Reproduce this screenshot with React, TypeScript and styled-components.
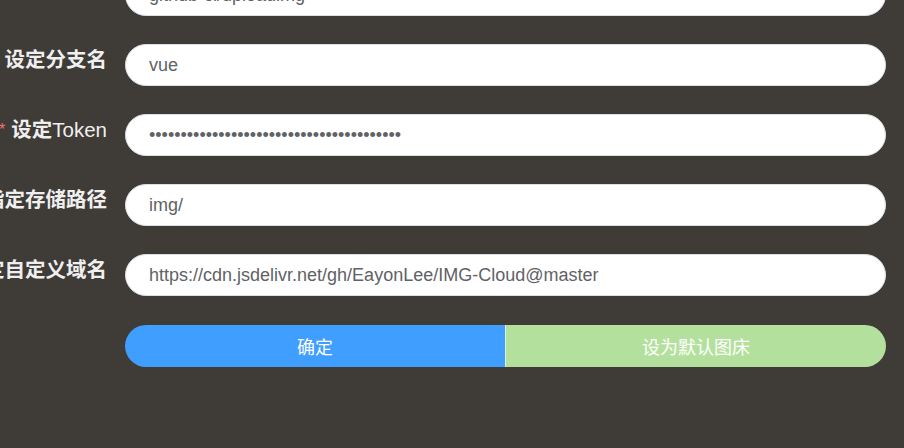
import React from 'react';
import styled, { createGlobalStyle } from 'styled-components';

const GlobalStyle = createGlobalStyle`
    html, body {
        margin: 0;
        padding: 0;
        background-color: #3f3b37;
        overflow: hidden;
    }
`

const Page = styled.div`
    width: 904px;
    height: 448px;
    background-color: #3f3b37;
    overflow: hidden;
    font-family: "Liberation Sans", "Noto Sans CJK SC", sans-serif;
`

const Form = styled.form`
    display: flex;
    flex-direction: column;
    gap: 28px;
    margin-top: -26px;
    padding-right: 18px;
`

const Row = styled.div<{ $offset?: number }>`
    display: flex;
    align-items: flex-start;
    margin-top: ${props => props.$offset || 0}px;
`

const Label = styled.label`
    flex: 0 0 107px;
    width: 107px;
    min-width: 0;
    display: flex;
    justify-content: flex-end;
    white-space: nowrap;
    margin-right: 18px;
    line-height: 32px;
    font-size: 20.5px;
    font-weight: bold;
    color: #efefef;
    font-family: "Liberation Sans", "Noto Sans CJK SC", sans-serif;
`

const Latin = styled.span`
    font-weight: normal;
`

const Star = styled.span`
    color: #f56c6c;
    margin-right: 6px;
    font-size: 16px;
    font-weight: normal;
`

const Field = styled.input`
    flex: 1;
    min-width: 0;
    box-sizing: border-box;
    height: 42px;
    border: 1px solid #dcdfe6;
    border-radius: 21px;
    background: #fff;
    padding: 0 23px;
    font-size: 18px;
    color: #606266;
    font-family: "Liberation Sans", "Noto Sans CJK SC", sans-serif;
    outline: none;
`

const ButtonGroup = styled.div`
    flex: 1;
    display: flex;
    height: 42px;
    border-radius: 21px;
    overflow: hidden;
`

const Button = styled.button<{ $variant: 'primary' | 'light' }>`
    flex: 1;
    border: none;
    margin: 0;
    font-size: 18px;
    color: #fff;
    font-family: "Liberation Sans", "Noto Sans CJK SC", sans-serif;
    background-color: ${props => props.$variant === 'primary' ? '#409eff' : '#b3e19d'};
    border-left: ${props => props.$variant === 'light' ? '1px solid rgba(255,255,255,0.6)' : 'none'};
`

const App: React.FC = () => {

    const fields = [
        { label: "设定仓库名", value: "github-ci/uploadimg", required: true },
        { label: "设定分支名", value: "vue" },
        { label: "设定", latin: "Token", value: "ghp_0123456789abcdefghijklmnopqrstuvwxyz", required: true, password: true },
        { label: "指定存储路径", value: "img/" },
        { label: "设定自定义域名", value: "https://cdn.jsdelivr.net/gh/EayonLee/IMG-Cloud@master" },
    ];

    return <Page>
        <GlobalStyle />
        <Form onSubmit={e => e.preventDefault()}>
            {fields.map((field: any, index: number) => {
                return <Row key={index}>
                    <Label>
                        {field.required && <Star>*</Star>}
                        {field.label}
                        {field.latin && <Latin>{field.latin}</Latin>}
                    </Label>
                    <Field type={field.password ? 'password' : 'text'} defaultValue={field.value} readOnly />
                </Row>
            })}
            <Row $offset={1}>
                <Label />
                <ButtonGroup>
                    <Button type="button" $variant="primary">确定</Button>
                    <Button type="button" $variant="light">设为默认图床</Button>
                </ButtonGroup>
            </Row>
        </Form>
    </Page>
}

export default App;
